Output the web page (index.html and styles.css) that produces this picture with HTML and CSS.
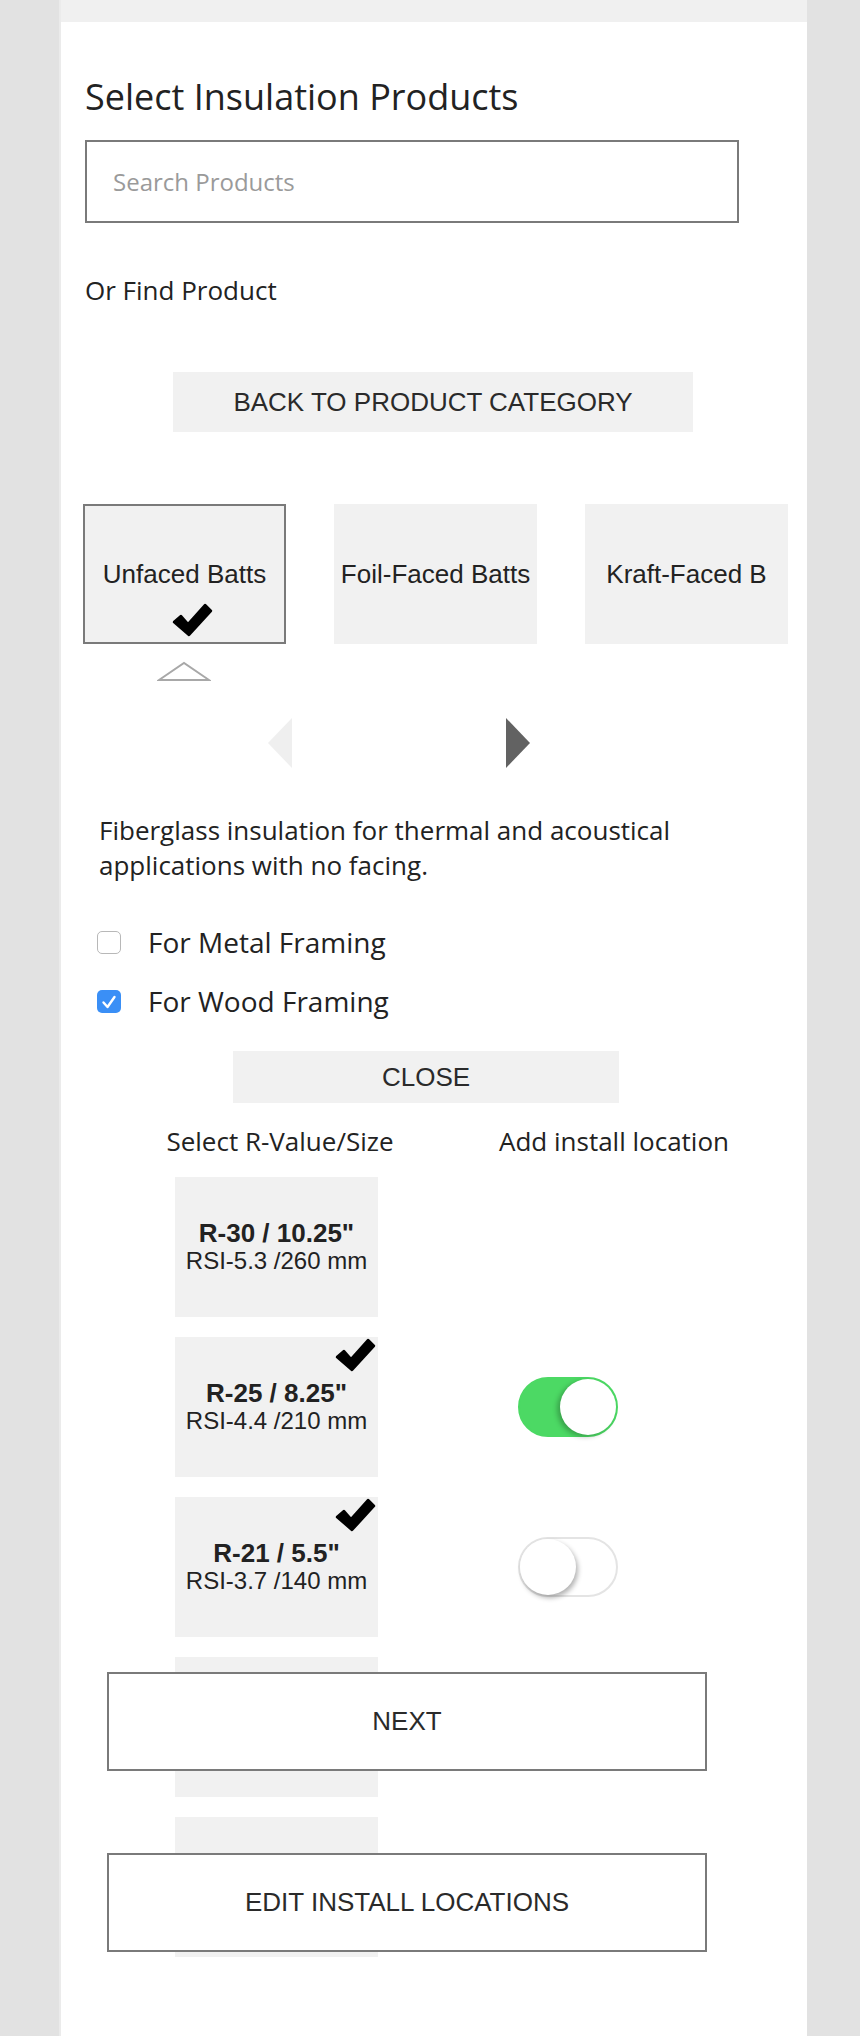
FILE: index.html
```html
<!DOCTYPE html>
<html lang="en">

<head>
    <meta charset="UTF-8">
    <title>Select Insulation Products</title>
    <link rel="stylesheet" href="styles.css">
</head>

<body>
    <div class="page">
        <div class="topbar"></div>
        <h1 class="title">Select Insulation Products</h1>
        <input class="search" type="text" placeholder="Search Products">
        <p class="find">Or Find Product</p>
        <button class="back">BACK TO PRODUCT CATEGORY</button>

        <div class="categories">
            <div class="cat selected">Unfaced Batts
                <svg class="check cat-check" viewBox="0 0 42 36" width="42" height="36">
                    <path d="M3 20 L10 14 L17 22 L34 3 L40 9 L18 33 Z" />
                </svg>
            </div>
            <div class="cat">Foil-Faced Batts</div>
            <div class="cat">Kraft-Faced B</div>
        </div>
        <div class="pointer">
            <svg viewBox="0 0 54 21" width="54" height="21">
                <polygon points="2,19 27,2 52,19" fill="#fff" stroke="#a8a8a8" stroke-width="2" />
            </svg>
        </div>
        <div class="pager">
            <svg viewBox="0 0 24 50" width="24" height="50">
                <polygon points="24,0 24,50 0,25" fill="#efefef" />
            </svg>
            <svg viewBox="0 0 24 50" width="24" height="50">
                <polygon points="0,0 24,25 0,50" fill="#626262" />
            </svg>
        </div>

        <p class="desc">Fiberglass insulation for thermal and acoustical applications with no facing.</p>
        <label class="opt"><span class="box"></span>For Metal Framing</label>
        <label class="opt"><span class="box checked"><svg viewBox="0 0 24 24" width="24" height="24">
                    <path d="M6.5 12.5 L10.5 17 L17.5 7" fill="none" stroke="#fff" stroke-width="2.4"
                        stroke-linecap="round" stroke-linejoin="round" />
                </svg></span>For Wood Framing</label>
        <button class="close">CLOSE</button>

        <div class="cols">
            <span>Select R-Value/Size</span>
            <span>Add install location</span>
        </div>
        <div class="rows">
            <div class="row">
                <div class="size"><b>R-30 / 10.25"</b><span>RSI-5.3 /260 mm</span></div>
            </div>
            <div class="row">
                <div class="size">
                    <svg class="check size-check" viewBox="0 0 42 36" width="42" height="36">
                        <path d="M3 20 L10 14 L17 22 L34 3 L40 9 L18 33 Z" />
                    </svg>
                    <b>R-25 / 8.25"</b><span>RSI-4.4 /210 mm</span>
                </div>
                <div class="switch on"><span class="knob"></span></div>
            </div>
            <div class="row">
                <div class="size">
                    <svg class="check size-check" viewBox="0 0 42 36" width="42" height="36">
                        <path d="M3 20 L10 14 L17 22 L34 3 L40 9 L18 33 Z" />
                    </svg>
                    <b>R-21 / 5.5"</b><span>RSI-3.7 /140 mm</span>
                </div>
                <div class="switch"><span class="knob"></span></div>
            </div>
            <div class="row">
                <div class="size"></div>
            </div>
            <div class="row">
                <div class="size"></div>
            </div>
        </div>

        <button class="action next">NEXT</button>
        <button class="action edit">EDIT INSTALL LOCATIONS</button>
    </div>
</body>

</html>
```

FILE: styles.css
```css
body {
    margin: 0;
    background-color: #e2e2e2;
    font-family: "Open Sans", "Liberation Sans", sans-serif;
    color: #222;
}

.page {
    position: relative;
    margin-left: 59px;
    width: 746px;
    min-height: 2036px;
    border-left: 2px solid #ebebeb;
    background-color: #fff;
    overflow: hidden;
}

.topbar {
    height: 22px;
    background-color: #f0f0f0;
}

.title {
    margin: 53px 0 0 24px;
    font-size: 36px;
    font-weight: normal;
    line-height: 44px;
}

.search {
    display: block;
    box-sizing: border-box;
    margin: 21px 0 0 24px;
    width: 654px;
    height: 83px;
    padding: 0 0 0 26px;
    border: 2px solid #7a7a7a;
    font-family: "Open Sans", sans-serif;
    font-size: 24px;
    color: #222;
    outline: none;
}

.search::placeholder {
    color: #9a9a9a;
}

.find {
    margin: 50px 0 0 24px;
    font-size: 26px;
    line-height: 34px;
}

button {
    display: block;
    padding: 0;
    border: 0;
    font-family: "Liberation Sans", Arial, sans-serif;
    color: #2a2a2a;
    background-color: #f1f1f1;
}

.back {
    margin: 65px 0 0 112px;
    width: 520px;
    height: 60px;
    font-size: 26px;
}

.categories {
    display: flex;
    gap: 48px;
    margin: 72px 0 0 22px;
}

.cat {
    position: relative;
    box-sizing: border-box;
    display: flex;
    align-items: center;
    justify-content: center;
    width: 203px;
    height: 140px;
    background-color: #f1f1f1;
    font-family: "Liberation Sans", Arial, sans-serif;
    font-size: 26px;
    white-space: nowrap;
}

.cat.selected {
    border: 2px solid #7a7a7a;
}

.check path {
    fill: #000;
    stroke: #000;
    stroke-width: 2.5;
    stroke-linejoin: round;
}

.cat-check {
    position: absolute;
    left: 86px;
    bottom: 4px;
}

.pointer {
    height: 21px;
    margin: 17px 0 0 96px;
}

.pointer svg,
.pager svg {
    display: block;
}

.pager {
    display: flex;
    gap: 214px;
    height: 50px;
    margin: 36px 0 0 207px;
}

.desc {
    width: 620px;
    margin: 45px 0 0 38px;
    font-size: 26px;
    line-height: 35px;
}

.opt {
    display: flex;
    align-items: center;
    height: 36px;
    margin: 41px 0 0 36px;
    font-size: 28px;
}

.opt + .opt {
    margin-top: 23px;
}

.box {
    box-sizing: border-box;
    width: 24px;
    height: 23px;
    margin-right: 27px;
    border: 1.5px solid #b8b8b8;
    border-radius: 5px;
    background-color: #fff;
}

.box.checked {
    border: 0;
    background-color: #3a8ff6;
}

.box svg {
    display: block;
}

.close {
    margin: 32px 0 0 172px;
    width: 386px;
    height: 52px;
    font-size: 26px;
}

.cols {
    display: flex;
    gap: 74px;
    margin: 21px 0 0 89px;
    font-size: 26px;
    line-height: 34px;
}

.cols span {
    width: 260px;
    text-align: center;
    white-space: nowrap;
}

.rows {
    display: flex;
    flex-direction: column;
    gap: 20px;
    margin: 19px 0 0 114px;
}

.row {
    display: flex;
    align-items: center;
    gap: 140px;
}

.size {
    position: relative;
    display: flex;
    flex-direction: column;
    align-items: center;
    justify-content: center;
    width: 203px;
    height: 140px;
    background-color: #f1f1f1;
    font-family: "Liberation Sans", Arial, sans-serif;
    font-size: 24px;
    line-height: 28px;
    color: #222;
}

.size b {
    font-size: 26px;
}

.size-check {
    position: absolute;
    top: 0;
    right: 2px;
}

.switch {
    position: relative;
    box-sizing: border-box;
    width: 100px;
    height: 60px;
    border: 2px solid #e4e4e4;
    border-radius: 30px;
    background-color: #fff;
}

.switch.on {
    border-color: #4cd964;
    background-color: #4cd964;
}

.knob {
    position: absolute;
    top: 0;
    left: 0;
    width: 56px;
    height: 56px;
    border-radius: 50%;
    background-color: #fff;
    box-shadow: 2px 3px 5px rgba(0, 0, 0, 0.3);
}

.switch.on .knob {
    left: auto;
    right: 0;
    box-shadow: -3px 2px 5px rgba(0, 0, 0, 0.25);
}

.action {
    position: absolute;
    left: 46px;
    box-sizing: border-box;
    width: 600px;
    height: 99px;
    border: 2px solid #7a7a7a;
    background-color: #fff;
    font-size: 26px;
}

.next {
    top: 1672px;
}

.edit {
    top: 1853px;
}
```
